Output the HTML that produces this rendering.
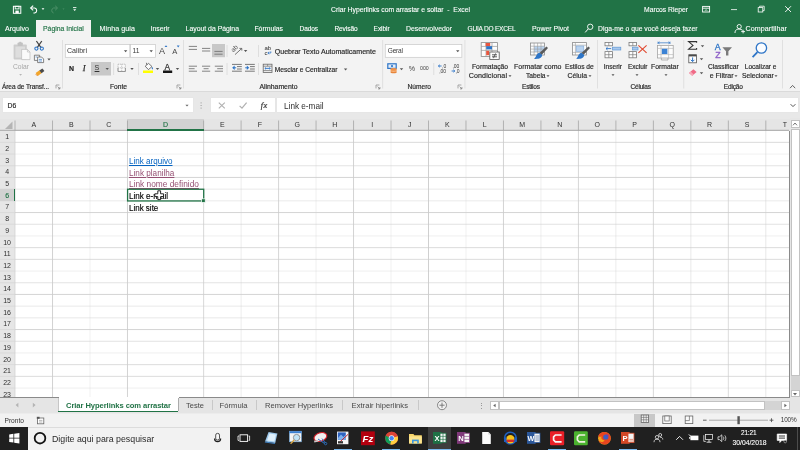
<!DOCTYPE html>
<html lang="pt-BR"><head><meta charset="utf-8"><title>Criar Hyperlinks com arrastar e soltar - Excel</title>
<style>
html,body{margin:0;padding:0;}
body{width:800px;height:450px;overflow:hidden;position:relative;background:#fff;font-family:"Liberation Sans",sans-serif;}
.t{position:absolute;white-space:pre;line-height:12px;height:12px;}
.b{position:absolute;display:block;overflow:visible;}
#root{position:absolute;left:0;top:0;width:800px;height:450px;will-change:transform;}
</style></head><body><div id="root">
<div class="b" style="left:0.00px;top:0.00px;width:800.00px;height:37.00px;background:#217346;"></div>
<div class="b" style="left:36.20px;top:20.00px;width:55.30px;height:17.50px;background:#f3f3f3;"></div>
<div class="b" style="left:0.00px;top:37.00px;width:800.00px;height:54.20px;background:#f3f3f3;"></div>
<div class="b" style="left:0.00px;top:91.00px;width:800.00px;height:0.80px;background:#dadada;"></div>
<div class="b" style="left:0.00px;top:91.80px;width:800.00px;height:27.00px;background:#e8e8e8;"></div>
<div class="b" style="left:0.00px;top:118.60px;width:800.00px;height:12.00px;background:#e5e5e5;"></div>
<div class="b" style="left:3.00px;top:98.20px;width:189.60px;height:14.20px;background:#fff;box-shadow:0 0 0 0.5px #e4e4e4;"></div>
<div class="b" style="left:210.60px;top:98.20px;width:64.00px;height:14.20px;background:#fff;box-shadow:0 0 0 0.5px #e4e4e4;"></div>
<div class="b" style="left:277.40px;top:98.20px;width:520.20px;height:14.20px;background:#fff;box-shadow:0 0 0 0.5px #e4e4e4;"></div>
<div class="b" style="left:0.00px;top:131.00px;width:790.00px;height:266.50px;background:#fff;"></div>
<div class="b" style="left:0.00px;top:131.00px;width:15.00px;height:266.50px;background:#e6e6e6;"></div>
<div class="b" style="left:127.48px;top:118.80px;width:76.14px;height:11.40px;background:#d2d2d2;"></div>
<div class="b" style="left:0.00px;top:189.15px;width:15.00px;height:11.70px;background:#d2d2d2;"></div>
<svg class="b" style="left:0.00px;top:0.00px" width="800" height="450" viewBox="0 0 800 450"><line x1="52.52" y1="120.5" x2="52.52" y2="130.5" stroke="#9c9c9c" stroke-width="0.7"/><line x1="52.52" y1="131" x2="52.52" y2="397" stroke="#cbcbcb" stroke-width="0.9" stroke-opacity="0.97"/><line x1="90.00" y1="120.5" x2="90.00" y2="130.5" stroke="#9c9c9c" stroke-width="0.7"/><line x1="90.00" y1="131" x2="90.00" y2="397" stroke="#cbcbcb" stroke-width="0.9" stroke-opacity="0.30"/><line x1="127.48" y1="120.5" x2="127.48" y2="130.5" stroke="#9c9c9c" stroke-width="0.7"/><line x1="127.48" y1="131" x2="127.48" y2="397" stroke="#cbcbcb" stroke-width="0.9" stroke-opacity="0.97"/><line x1="203.62" y1="120.5" x2="203.62" y2="130.5" stroke="#9c9c9c" stroke-width="0.7"/><line x1="203.62" y1="131" x2="203.62" y2="397" stroke="#cbcbcb" stroke-width="0.9" stroke-opacity="0.82"/><line x1="241.10" y1="120.5" x2="241.10" y2="130.5" stroke="#9c9c9c" stroke-width="0.7"/><line x1="241.10" y1="131" x2="241.10" y2="397" stroke="#cbcbcb" stroke-width="0.9" stroke-opacity="0.40"/><line x1="278.58" y1="120.5" x2="278.58" y2="130.5" stroke="#9c9c9c" stroke-width="0.7"/><line x1="278.58" y1="131" x2="278.58" y2="397" stroke="#cbcbcb" stroke-width="0.9" stroke-opacity="0.88"/><line x1="316.06" y1="120.5" x2="316.06" y2="130.5" stroke="#9c9c9c" stroke-width="0.7"/><line x1="316.06" y1="131" x2="316.06" y2="397" stroke="#cbcbcb" stroke-width="0.9" stroke-opacity="0.34"/><line x1="353.54" y1="120.5" x2="353.54" y2="130.5" stroke="#9c9c9c" stroke-width="0.7"/><line x1="353.54" y1="131" x2="353.54" y2="397" stroke="#cbcbcb" stroke-width="0.9" stroke-opacity="0.94"/><line x1="391.02" y1="120.5" x2="391.02" y2="130.5" stroke="#9c9c9c" stroke-width="0.7"/><line x1="391.02" y1="131" x2="391.02" y2="397" stroke="#cbcbcb" stroke-width="0.9" stroke-opacity="0.30"/><line x1="428.50" y1="120.5" x2="428.50" y2="130.5" stroke="#9c9c9c" stroke-width="0.7"/><line x1="428.50" y1="131" x2="428.50" y2="397" stroke="#cbcbcb" stroke-width="0.9" stroke-opacity="1.00"/><line x1="465.98" y1="120.5" x2="465.98" y2="130.5" stroke="#9c9c9c" stroke-width="0.7"/><line x1="465.98" y1="131" x2="465.98" y2="397" stroke="#cbcbcb" stroke-width="0.9" stroke-opacity="0.30"/><line x1="503.46" y1="120.5" x2="503.46" y2="130.5" stroke="#9c9c9c" stroke-width="0.7"/><line x1="503.46" y1="131" x2="503.46" y2="397" stroke="#cbcbcb" stroke-width="0.9" stroke-opacity="0.94"/><line x1="540.94" y1="120.5" x2="540.94" y2="130.5" stroke="#9c9c9c" stroke-width="0.7"/><line x1="540.94" y1="131" x2="540.94" y2="397" stroke="#cbcbcb" stroke-width="0.9" stroke-opacity="0.34"/><line x1="578.42" y1="120.5" x2="578.42" y2="130.5" stroke="#9c9c9c" stroke-width="0.7"/><line x1="578.42" y1="131" x2="578.42" y2="397" stroke="#cbcbcb" stroke-width="0.9" stroke-opacity="0.88"/><line x1="615.90" y1="120.5" x2="615.90" y2="130.5" stroke="#9c9c9c" stroke-width="0.7"/><line x1="615.90" y1="131" x2="615.90" y2="397" stroke="#cbcbcb" stroke-width="0.9" stroke-opacity="0.40"/><line x1="653.38" y1="120.5" x2="653.38" y2="130.5" stroke="#9c9c9c" stroke-width="0.7"/><line x1="653.38" y1="131" x2="653.38" y2="397" stroke="#cbcbcb" stroke-width="0.9" stroke-opacity="0.82"/><line x1="690.86" y1="120.5" x2="690.86" y2="130.5" stroke="#9c9c9c" stroke-width="0.7"/><line x1="690.86" y1="131" x2="690.86" y2="397" stroke="#cbcbcb" stroke-width="0.9" stroke-opacity="0.46"/><line x1="728.34" y1="120.5" x2="728.34" y2="130.5" stroke="#9c9c9c" stroke-width="0.7"/><line x1="728.34" y1="131" x2="728.34" y2="397" stroke="#cbcbcb" stroke-width="0.9" stroke-opacity="0.76"/><line x1="765.82" y1="120.5" x2="765.82" y2="130.5" stroke="#9c9c9c" stroke-width="0.7"/><line x1="765.82" y1="131" x2="765.82" y2="397" stroke="#cbcbcb" stroke-width="0.9" stroke-opacity="0.52"/><line x1="15.0" y1="120.5" x2="15.0" y2="130.5" stroke="#9c9c9c" stroke-width="0.7"/><line x1="15.0" y1="131" x2="15.0" y2="397" stroke="#cfcfcf" stroke-width="0.7"/><line x1="15.0" y1="142.35" x2="789" y2="142.35" stroke="#cbcbcb" stroke-width="0.9" stroke-opacity="0.77"/><line x1="0" y1="142.35" x2="15.0" y2="142.35" stroke="#d2d2d2" stroke-width="0.6"/><line x1="15.0" y1="154.05" x2="789" y2="154.05" stroke="#cbcbcb" stroke-width="0.9" stroke-opacity="0.33"/><line x1="0" y1="154.05" x2="15.0" y2="154.05" stroke="#d2d2d2" stroke-width="0.6"/><line x1="15.0" y1="165.75" x2="789" y2="165.75" stroke="#cbcbcb" stroke-width="0.9" stroke-opacity="0.62"/><line x1="0" y1="165.75" x2="15.0" y2="165.75" stroke="#d2d2d2" stroke-width="0.6"/><line x1="15.0" y1="177.45" x2="789" y2="177.45" stroke="#cbcbcb" stroke-width="0.9" stroke-opacity="0.92"/><line x1="0" y1="177.45" x2="15.0" y2="177.45" stroke="#d2d2d2" stroke-width="0.6"/><line x1="15.0" y1="189.15" x2="789" y2="189.15" stroke="#cbcbcb" stroke-width="0.9" stroke-opacity="0.48"/><line x1="0" y1="189.15" x2="15.0" y2="189.15" stroke="#d2d2d2" stroke-width="0.6"/><line x1="15.0" y1="200.85" x2="789" y2="200.85" stroke="#cbcbcb" stroke-width="0.9" stroke-opacity="0.48"/><line x1="0" y1="200.85" x2="15.0" y2="200.85" stroke="#d2d2d2" stroke-width="0.6"/><line x1="15.0" y1="212.55" x2="789" y2="212.55" stroke="#cbcbcb" stroke-width="0.9" stroke-opacity="0.92"/><line x1="0" y1="212.55" x2="15.0" y2="212.55" stroke="#d2d2d2" stroke-width="0.6"/><line x1="15.0" y1="224.25" x2="789" y2="224.25" stroke="#cbcbcb" stroke-width="0.9" stroke-opacity="0.62"/><line x1="0" y1="224.25" x2="15.0" y2="224.25" stroke="#d2d2d2" stroke-width="0.6"/><line x1="15.0" y1="235.95" x2="789" y2="235.95" stroke="#cbcbcb" stroke-width="0.9" stroke-opacity="0.33"/><line x1="0" y1="235.95" x2="15.0" y2="235.95" stroke="#d2d2d2" stroke-width="0.6"/><line x1="15.0" y1="247.65" x2="789" y2="247.65" stroke="#cbcbcb" stroke-width="0.9" stroke-opacity="0.77"/><line x1="0" y1="247.65" x2="15.0" y2="247.65" stroke="#d2d2d2" stroke-width="0.6"/><line x1="15.0" y1="259.35" x2="789" y2="259.35" stroke="#cbcbcb" stroke-width="0.9" stroke-opacity="0.78"/><line x1="0" y1="259.35" x2="15.0" y2="259.35" stroke="#d2d2d2" stroke-width="0.6"/><line x1="15.0" y1="271.05" x2="789" y2="271.05" stroke="#cbcbcb" stroke-width="0.9" stroke-opacity="0.32"/><line x1="0" y1="271.05" x2="15.0" y2="271.05" stroke="#d2d2d2" stroke-width="0.6"/><line x1="15.0" y1="282.75" x2="789" y2="282.75" stroke="#cbcbcb" stroke-width="0.9" stroke-opacity="0.62"/><line x1="0" y1="282.75" x2="15.0" y2="282.75" stroke="#d2d2d2" stroke-width="0.6"/><line x1="15.0" y1="294.45" x2="789" y2="294.45" stroke="#cbcbcb" stroke-width="0.9" stroke-opacity="0.92"/><line x1="0" y1="294.45" x2="15.0" y2="294.45" stroke="#d2d2d2" stroke-width="0.6"/><line x1="15.0" y1="306.15" x2="789" y2="306.15" stroke="#cbcbcb" stroke-width="0.9" stroke-opacity="0.47"/><line x1="0" y1="306.15" x2="15.0" y2="306.15" stroke="#d2d2d2" stroke-width="0.6"/><line x1="15.0" y1="317.85" x2="789" y2="317.85" stroke="#cbcbcb" stroke-width="0.9" stroke-opacity="0.47"/><line x1="0" y1="317.85" x2="15.0" y2="317.85" stroke="#d2d2d2" stroke-width="0.6"/><line x1="15.0" y1="329.55" x2="789" y2="329.55" stroke="#cbcbcb" stroke-width="0.9" stroke-opacity="0.93"/><line x1="0" y1="329.55" x2="15.0" y2="329.55" stroke="#d2d2d2" stroke-width="0.6"/><line x1="15.0" y1="341.25" x2="789" y2="341.25" stroke="#cbcbcb" stroke-width="0.9" stroke-opacity="0.62"/><line x1="0" y1="341.25" x2="15.0" y2="341.25" stroke="#d2d2d2" stroke-width="0.6"/><line x1="15.0" y1="352.95" x2="789" y2="352.95" stroke="#cbcbcb" stroke-width="0.9" stroke-opacity="0.33"/><line x1="0" y1="352.95" x2="15.0" y2="352.95" stroke="#d2d2d2" stroke-width="0.6"/><line x1="15.0" y1="364.65" x2="789" y2="364.65" stroke="#cbcbcb" stroke-width="0.9" stroke-opacity="0.78"/><line x1="0" y1="364.65" x2="15.0" y2="364.65" stroke="#d2d2d2" stroke-width="0.6"/><line x1="15.0" y1="376.35" x2="789" y2="376.35" stroke="#cbcbcb" stroke-width="0.9" stroke-opacity="0.78"/><line x1="0" y1="376.35" x2="15.0" y2="376.35" stroke="#d2d2d2" stroke-width="0.6"/><line x1="15.0" y1="388.05" x2="789" y2="388.05" stroke="#cbcbcb" stroke-width="0.9" stroke-opacity="0.32"/><line x1="0" y1="388.05" x2="15.0" y2="388.05" stroke="#d2d2d2" stroke-width="0.6"/><line x1="0" y1="130.3" x2="789" y2="130.3" stroke="#a0a0a0" stroke-width="0.9"/><path d="M5 129 L12.5 129 L12.5 121.5 Z" fill="#b4b4b4"/></svg>
<div class="b" style="left:127.48px;top:129.30px;width:76.14px;height:1.40px;background:#217346;"></div>
<div class="b" style="left:14.20px;top:189.15px;width:1.10px;height:11.70px;background:#217346;"></div>
<div class="b" style="left:788.60px;top:131.00px;width:1.20px;height:266.50px;background:#8a8a8a;"></div>
<div class="b" style="left:0.00px;top:396.80px;width:58.60px;height:1.10px;background:#8a8a8a;"></div>
<div class="b" style="left:178.60px;top:396.80px;width:611.40px;height:1.10px;background:#8a8a8a;"></div>
<div class="b" style="left:789.80px;top:118.00px;width:10.20px;height:280.00px;background:#e6e6e6;"></div>
<div class="b" style="left:790.60px;top:120.00px;width:9.40px;height:8.30px;background:#fff;border:0.6px solid #c2c2c2;box-sizing:border-box;"></div>
<div class="b" style="left:790.60px;top:128.50px;width:9.40px;height:247.50px;background:#fff;border:0.6px solid #c2c2c2;box-sizing:border-box;"></div>
<div class="b" style="left:790.60px;top:376.00px;width:9.40px;height:13.60px;background:#d4d4d4;"></div>
<div class="b" style="left:790.60px;top:389.70px;width:9.40px;height:7.50px;background:#fff;border:0.6px solid #c2c2c2;box-sizing:border-box;"></div>
<svg class="b" style="left:792.30px;top:122.00px" width="6" height="4" viewBox="0 0 6 4"><path d="M1 3.3 L3 1 L5 3.3" fill="none" stroke="#777" stroke-width="1"/></svg>
<svg class="b" style="left:792.30px;top:391.80px" width="6" height="4" viewBox="0 0 6 4"><path d="M1 1 L5 1 L3 3.4 Z" fill="#666"/></svg>
<div class="b" style="left:0.00px;top:397.90px;width:800.00px;height:15.10px;background:#e5e5e5;"></div>
<div class="b" style="left:0.00px;top:413.00px;width:800.00px;height:1.00px;background:#ececec;"></div>
<div class="b" style="left:58.60px;top:396.60px;width:119.80px;height:14.60px;background:#fff;"></div>
<div class="b" style="left:58.40px;top:411.00px;width:120.00px;height:1.40px;background:#217346;"></div>
<div class="b" style="left:58.40px;top:397.90px;width:0.70px;height:13.00px;background:#c6c6c6;"></div>
<div class="b" style="left:178.20px;top:397.90px;width:0.70px;height:13.00px;background:#ababab;"></div>
<div class="b" style="left:212.40px;top:400.00px;width:0.70px;height:10.00px;background:#c8c8c8;"></div>
<div class="b" style="left:256.40px;top:400.00px;width:0.70px;height:10.00px;background:#c8c8c8;"></div>
<div class="b" style="left:342.40px;top:400.00px;width:0.70px;height:10.00px;background:#c8c8c8;"></div>
<div class="b" style="left:417.60px;top:400.00px;width:0.70px;height:10.00px;background:#c8c8c8;"></div>
<div class="b" style="left:490.00px;top:401.20px;width:9.30px;height:8.80px;background:#fff;border:0.6px solid #c2c2c2;box-sizing:border-box;"></div>
<div class="b" style="left:499.30px;top:401.20px;width:265.50px;height:8.80px;background:#fff;border:0.6px solid #c2c2c2;box-sizing:border-box;"></div>
<div class="b" style="left:764.80px;top:401.20px;width:16.40px;height:8.80px;background:#d4d4d4;"></div>
<div class="b" style="left:781.20px;top:401.20px;width:8.60px;height:8.80px;background:#fff;border:0.6px solid #c2c2c2;box-sizing:border-box;"></div>
<svg class="b" style="left:492.30px;top:403.00px" width="5" height="5" viewBox="0 0 5 5"><path d="M3.6 0.8 L3.6 4.2 L1.2 2.5 Z" fill="#666"/></svg>
<svg class="b" style="left:783.20px;top:403.00px" width="5" height="5" viewBox="0 0 5 5"><path d="M1.4 0.8 L1.4 4.2 L3.8 2.5 Z" fill="#666"/></svg>
<div class="b" style="left:480.50px;top:402.60px;width:1.00px;height:1.00px;background:#999;"></div>
<div class="b" style="left:480.50px;top:405.20px;width:1.00px;height:1.00px;background:#999;"></div>
<div class="b" style="left:480.50px;top:407.80px;width:1.00px;height:1.00px;background:#999;"></div>
<div class="b" style="left:0.00px;top:414.00px;width:800.00px;height:13.00px;background:#f2f2f2;"></div>
<div class="b" style="left:633.80px;top:414.00px;width:21.70px;height:13.00px;background:#c8c8c8;"></div>
<div class="b" style="left:0.00px;top:427.00px;width:800.00px;height:23.00px;background:#202020;"></div>
<div class="b" style="left:28.00px;top:427.00px;width:202.30px;height:23.00px;background:#f2f2f2;"></div>
<div class="b" style="left:28.00px;top:426.60px;width:202.30px;height:0.80px;background:#dcdcdc;"></div>
<div class="b" style="left:428.20px;top:427.00px;width:23.30px;height:23.00px;background:#3e3e3e;"></div>
<div class="b" style="left:334.00px;top:449.00px;width:18.00px;height:1.00px;background:#79b8ee;"></div>
<div class="b" style="left:382.00px;top:449.00px;width:18.00px;height:1.00px;background:#79b8ee;"></div>
<div class="b" style="left:428.20px;top:449.00px;width:23.30px;height:1.00px;background:#79b8ee;"></div>
<div class="b" style="left:548.00px;top:449.00px;width:18.00px;height:1.00px;background:#79b8ee;"></div>
<div class="b" style="left:619.00px;top:449.00px;width:18.00px;height:1.00px;background:#79b8ee;"></div>
<div class="b" style="left:797.30px;top:427.00px;width:0.70px;height:23.00px;background:#4c4c4c;"></div>
<svg class="b" style="left:0;top:0" width="800" height="450" viewBox="0 0 800 450"><g transform="translate(0,-0.6)"><rect x="13.40" y="6.90" width="7.40" height="7.00" fill="none" stroke="#fff" stroke-width="1.0" /><rect x="15.20" y="6.90" width="3.80" height="2.60" fill="none" stroke="#fff" stroke-width="0.9" /><rect x="15.40" y="11.20" width="3.40" height="2.70" fill="#fff" stroke="none" stroke-width="1" /><path d="M31.2 8.6 L34.8 8.6 A2.6 2.6 0 0 1 34.8 13.6 L33.4 13.6" fill="none" stroke="#fff" stroke-width="1.1" /><path d="M33.2 6.2 L30.6 8.6 L33.2 11" fill="none" stroke="#fff" stroke-width="1.1" /><path d="M41.65 8.92 L44.35 8.92 L43.00 10.58 Z" fill="#fff" stroke="none" stroke-width="1" /><path d="M57 8.6 L53.6 8.6 A2.6 2.6 0 0 0 53.6 13.6" fill="none" stroke="#4d9068" stroke-width="1.0" /><path d="M55.2 6.4 L57.6 8.6 L55.2 10.8" fill="none" stroke="#4d9068" stroke-width="1.0" /><path d="M62.50 9.10 L64.50 9.10 L63.50 10.40 Z" fill="#4d9068" stroke="none" stroke-width="1" /><line x1="73.00" y1="8.20" x2="76.40" y2="8.20" stroke="#fff" stroke-width="0.9" /><path d="M73.20 9.85 L76.20 9.85 L74.70 11.65 Z" fill="#fff" stroke="none" stroke-width="1" /></g><rect x="702.60" y="6.40" width="7.00" height="5.60" fill="none" stroke="#fff" stroke-width="0.9" /><line x1="702.60" y1="8.20" x2="709.60" y2="8.20" stroke="#fff" stroke-width="0.9" /><path d="M705 10.8 L706.1 9.6 L707.2 10.8" fill="none" stroke="#fff" stroke-width="0.8" /><line x1="731.00" y1="9.60" x2="737.00" y2="9.60" stroke="#fff" stroke-width="0.8" /><rect x="758.20" y="7.60" width="4.60" height="4.40" fill="none" stroke="#fff" stroke-width="0.8" /><path d="M759.6 7.6 L759.6 6.2 L764.2 6.2 L764.2 10.6 L762.8 10.6" fill="none" stroke="#fff" stroke-width="0.8" /><line x1="785.20" y1="6.20" x2="791.00" y2="12.00" stroke="#fff" stroke-width="0.9" /><line x1="791.00" y1="6.20" x2="785.20" y2="12.00" stroke="#fff" stroke-width="0.9" /><circle cx="590.20" cy="26.80" r="2.70" fill="none" stroke="#fff" stroke-width="0.9"/><line x1="588.30" y1="28.80" x2="585.20" y2="32.40" stroke="#fff" stroke-width="1.0" /><circle cx="739.20" cy="26.60" r="2.10" fill="none" stroke="#fff" stroke-width="0.9"/><path d="M735 33 C735 29.6 737 29.2 739.2 29.2 C740.6 29.2 741.6 29.4 742.4 30.2" fill="none" stroke="#fff" stroke-width="0.9" /><line x1="741.20" y1="31.60" x2="745.00" y2="31.60" stroke="#fff" stroke-width="0.9" /><line x1="743.10" y1="29.80" x2="743.10" y2="33.40" stroke="#fff" stroke-width="0.9" /><line x1="62.50" y1="40.00" x2="62.50" y2="88.50" stroke="#dadada" stroke-width="0.8" /><line x1="183.50" y1="40.00" x2="183.50" y2="88.50" stroke="#dadada" stroke-width="0.8" /><line x1="382.60" y1="40.00" x2="382.60" y2="88.50" stroke="#dadada" stroke-width="0.8" /><line x1="464.90" y1="40.00" x2="464.90" y2="88.50" stroke="#dadada" stroke-width="0.8" /><line x1="597.50" y1="40.00" x2="597.50" y2="88.50" stroke="#dadada" stroke-width="0.8" /><line x1="683.75" y1="40.00" x2="683.75" y2="88.50" stroke="#dadada" stroke-width="0.8" /><line x1="782.50" y1="40.00" x2="782.50" y2="88.50" stroke="#dadada" stroke-width="0.8" /><path d="M56 88.4 L56 85 L59.4 85" fill="none" stroke="#888" stroke-width="0.7" /><path d="M57.6 86.6 L59.8 88.8 M59.9 87 L59.9 88.9 L58 88.9" fill="none" stroke="#777" stroke-width="0.7" /><path d="M177 88.4 L177 85 L180.4 85" fill="none" stroke="#888" stroke-width="0.7" /><path d="M178.6 86.6 L180.8 88.8 M180.9 87 L180.9 88.9 L179 88.9" fill="none" stroke="#777" stroke-width="0.7" /><path d="M376 88.4 L376 85 L379.4 85" fill="none" stroke="#888" stroke-width="0.7" /><path d="M377.6 86.6 L379.8 88.8 M379.9 87 L379.9 88.9 L378 88.9" fill="none" stroke="#777" stroke-width="0.7" /><path d="M458 88.4 L458 85 L461.4 85" fill="none" stroke="#888" stroke-width="0.7" /><path d="M459.6 86.6 L461.8 88.8 M461.9 87 L461.9 88.9 L460 88.9" fill="none" stroke="#777" stroke-width="0.7" /><path d="M790 88.2 L792.6 85.4 L795.2 88.2" fill="none" stroke="#555" stroke-width="0.9" /><rect x="13.60" y="44.60" width="13.20" height="14.80" fill="#cdcdcd" stroke="none" stroke-width="1" rx="0.8"/><rect x="17.60" y="42.40" width="5.20" height="3.60" fill="#c2c2c2" stroke="none" stroke-width="1" rx="0.8"/><rect x="19.20" y="41.80" width="2.00" height="1.60" fill="#c2c2c2" stroke="none" stroke-width="1" /><rect x="15.40" y="46.60" width="9.60" height="11.00" fill="#dedede" stroke="none" stroke-width="1" /><path d="M21.6 49.4 L27.4 49.4 L30 52 L30 59.6 L21.6 59.6 Z" fill="#fafafa" stroke="#bdbdbd" stroke-width="0.7" /><path d="M27.4 49.4 L27.4 52 L30 52" fill="none" stroke="#bdbdbd" stroke-width="0.7" /><path d="M19.20 74.00 L22.00 74.00 L20.60 75.70 Z" fill="#b5b5b5" stroke="none" stroke-width="1" /><line x1="36.40" y1="41.00" x2="41.20" y2="47.80" stroke="#444" stroke-width="1.25" /><line x1="41.80" y1="41.00" x2="37.00" y2="47.80" stroke="#444" stroke-width="1.25" /><circle cx="36.40" cy="48.60" r="1.60" fill="none" stroke="#2e75c7" stroke-width="1.1"/><circle cx="41.80" cy="48.60" r="1.60" fill="none" stroke="#2e75c7" stroke-width="1.1"/><path d="M34.4 55.2 L39.6 55.2 L39.6 60.4 L34.4 60.4 Z" fill="#fafafa" stroke="#666" stroke-width="0.8" /><path d="M37.6 57 L41.6 57 L43.6 59 L43.6 62.6 L37.6 62.6 Z" fill="#fafafa" stroke="#666" stroke-width="0.8" /><line x1="38.80" y1="59.40" x2="42.00" y2="59.40" stroke="#3a7fd0" stroke-width="0.7" /><line x1="38.80" y1="61.00" x2="42.00" y2="61.00" stroke="#3a7fd0" stroke-width="0.7" /><line x1="35.60" y1="57.00" x2="37.20" y2="57.00" stroke="#3a7fd0" stroke-width="0.7" /><path d="M47.30 58.55 L50.70 58.55 L49.00 60.55 Z" fill="#555" stroke="none" stroke-width="1" /><path d="M35.6 73 L39.6 70.2 L41.8 73 L37.8 76 Z" fill="#f2a52a" stroke="none" stroke-width="1" /><path d="M39.4 70.4 L42.4 68.4 L44.4 71 L41.6 73.2 Z" fill="#4a4a4a" stroke="none" stroke-width="1" /><line x1="35.60" y1="74.00" x2="37.60" y2="76.00" stroke="#e07b1a" stroke-width="0.8" /><rect x="65.30" y="44.50" width="64.50" height="12.80" fill="#fff" stroke="#c8c8c8" stroke-width="0.7" /><rect x="130.60" y="44.50" width="25.00" height="12.80" fill="#fff" stroke="#c8c8c8" stroke-width="0.7" /><path d="M123.90 50.35 L127.30 50.35 L125.60 52.35 Z" fill="#555" stroke="none" stroke-width="1" /><path d="M149.50 50.35 L152.90 50.35 L151.20 52.35 Z" fill="#555" stroke="none" stroke-width="1" /><text x="159.00" y="54.00" font-size="9" fill="#444" font-family="Liberation Sans, sans-serif" >A</text><path d="M164.6 47 L166 45.2 L167.4 47 Z" fill="#2e75c7" stroke="none" stroke-width="1" /><text x="172.20" y="54.00" font-size="7.6" fill="#444" font-family="Liberation Sans, sans-serif" >A</text><path d="M176.8 45.6 L179.6 45.6 L178.2 47.4 Z" fill="#2e75c7" stroke="none" stroke-width="1" /><rect x="91.00" y="62.00" width="20.00" height="13.50" fill="#c8c8c8" stroke="none" stroke-width="1" /><path d="M105.50 68.05 L108.90 68.05 L107.20 70.05 Z" fill="#555" stroke="none" stroke-width="1" /><line x1="113.60" y1="63.00" x2="113.60" y2="75.00" stroke="#d8d8d8" stroke-width="0.8" /><line x1="138.50" y1="63.00" x2="138.50" y2="75.00" stroke="#d8d8d8" stroke-width="0.8" /><rect x="118.00" y="64.20" width="7.40" height="7.20" fill="#fbfbfb" stroke="#b0b0b0" stroke-width="0.8" stroke-dasharray="1.2 0.7"/><line x1="121.70" y1="64.20" x2="121.70" y2="71.40" stroke="#b8b8b8" stroke-width="0.8" stroke-dasharray="1.2 0.7"/><line x1="118.00" y1="67.80" x2="125.40" y2="67.80" stroke="#b8b8b8" stroke-width="0.8" stroke-dasharray="1.2 0.7"/><path d="M118 68 L118 71.5 L125.4 71.5 L125.4 68" fill="none" stroke="#8f8f8f" stroke-width="0.9" /><path d="M130.30 68.05 L133.70 68.05 L132.00 70.05 Z" fill="#555" stroke="none" stroke-width="1" /><path d="M145.2 66.2 L148.6 63.4 L152 66.6 L148.4 69.6 Z" fill="#fbfbfb" stroke="#555" stroke-width="0.8" /><path d="M146.8 64.8 L146.4 62.8" fill="none" stroke="#555" stroke-width="0.8" /><path d="M152.2 66.8 C153.2 68 153.2 69.2 152.4 69.4 C151.6 69.2 151.6 68 152.2 66.8 Z" fill="#2e75c7" stroke="none" stroke-width="1" /><rect x="143.00" y="70.50" width="10.00" height="2.50" fill="#ffff00" stroke="none" stroke-width="1" /><path d="M155.80 68.05 L159.20 68.05 L157.50 70.05 Z" fill="#555" stroke="none" stroke-width="1" /><text x="164.60" y="70.40" font-size="8.4" fill="#333" font-family="Liberation Sans, sans-serif" stroke="#333" stroke-width="0.25">A</text><rect x="163.00" y="70.50" width="9.20" height="2.50" fill="#161616" stroke="none" stroke-width="1" /><path d="M175.80 68.05 L179.20 68.05 L177.50 70.05 Z" fill="#555" stroke="none" stroke-width="1" /><line x1="188.80" y1="46.40" x2="197.00" y2="46.40" stroke="#707070" stroke-width="0.85" /><line x1="188.80" y1="49.40" x2="197.00" y2="49.40" stroke="#707070" stroke-width="0.85" /><line x1="202.00" y1="48.40" x2="210.20" y2="48.40" stroke="#707070" stroke-width="0.85" /><line x1="202.00" y1="51.00" x2="210.20" y2="51.00" stroke="#707070" stroke-width="0.85" /><rect x="212.00" y="44.00" width="13.00" height="13.20" fill="#c8c8c8" stroke="none" stroke-width="1" /><line x1="214.40" y1="51.40" x2="222.60" y2="51.40" stroke="#707070" stroke-width="0.85" /><line x1="214.40" y1="54.20" x2="222.60" y2="54.20" stroke="#707070" stroke-width="0.85" /><line x1="227.00" y1="45.00" x2="227.00" y2="57.00" stroke="#d8d8d8" stroke-width="0.8" /><line x1="227.00" y1="63.00" x2="227.00" y2="75.00" stroke="#d8d8d8" stroke-width="0.8" /><line x1="258.50" y1="45.00" x2="258.50" y2="57.00" stroke="#d8d8d8" stroke-width="0.8" /><line x1="258.50" y1="63.00" x2="258.50" y2="75.00" stroke="#d8d8d8" stroke-width="0.8" /><line x1="188.80" y1="66.20" x2="197.00" y2="66.20" stroke="#707070" stroke-width="0.85" /><line x1="188.80" y1="68.70" x2="194.60" y2="68.70" stroke="#707070" stroke-width="0.85" /><line x1="188.80" y1="71.20" x2="197.00" y2="71.20" stroke="#707070" stroke-width="0.85" /><line x1="202.00" y1="66.20" x2="210.20" y2="66.20" stroke="#707070" stroke-width="0.85" /><line x1="203.60" y1="68.70" x2="208.60" y2="68.70" stroke="#707070" stroke-width="0.85" /><line x1="202.00" y1="71.20" x2="210.20" y2="71.20" stroke="#707070" stroke-width="0.85" /><line x1="214.80" y1="66.20" x2="223.00" y2="66.20" stroke="#707070" stroke-width="0.85" /><line x1="217.20" y1="68.70" x2="223.00" y2="68.70" stroke="#707070" stroke-width="0.85" /><line x1="214.80" y1="71.20" x2="223.00" y2="71.20" stroke="#707070" stroke-width="0.85" /><g transform="translate(233.2,52.4) rotate(-42)"><text x="0" y="0" font-size="6.4" fill="#555" font-family="Liberation Sans, sans-serif">ab</text></g><path d="M235 54.6 L241.6 48.6" fill="none" stroke="#555" stroke-width="0.8" /><path d="M239.4 48.4 L241.8 48.4 L241.8 50.6" fill="none" stroke="#555" stroke-width="0.8" /><path d="M243.90 49.95 L247.30 49.95 L245.60 51.95 Z" fill="#555" stroke="none" stroke-width="1" /><line x1="232.00" y1="64.40" x2="241.80" y2="64.40" stroke="#6a6a6a" stroke-width="0.9" /><line x1="232.00" y1="71.20" x2="241.80" y2="71.20" stroke="#6a6a6a" stroke-width="0.9" /><line x1="237.00" y1="66.60" x2="241.80" y2="66.60" stroke="#6a6a6a" stroke-width="0.9" /><line x1="237.00" y1="69.00" x2="241.80" y2="69.00" stroke="#6a6a6a" stroke-width="0.9" /><path d="M232.2 67.8 L234.6 65.6 L234.6 70 Z" fill="#2e75c7" stroke="none" stroke-width="1" /><line x1="234.00" y1="67.80" x2="236.20" y2="67.80" stroke="#2e75c7" stroke-width="1.0" /><line x1="245.00" y1="64.40" x2="254.80" y2="64.40" stroke="#6a6a6a" stroke-width="0.9" /><line x1="245.00" y1="71.20" x2="254.80" y2="71.20" stroke="#6a6a6a" stroke-width="0.9" /><line x1="250.00" y1="66.60" x2="254.80" y2="66.60" stroke="#6a6a6a" stroke-width="0.9" /><line x1="250.00" y1="69.00" x2="254.80" y2="69.00" stroke="#6a6a6a" stroke-width="0.9" /><path d="M249.2 67.8 L246.8 65.6 L246.8 70 Z" fill="#2e75c7" stroke="none" stroke-width="1" /><line x1="245.20" y1="67.80" x2="247.40" y2="67.80" stroke="#2e75c7" stroke-width="1.0" /><text x="264.40" y="50.20" font-size="6.0" fill="#2a2a2a" font-family="Liberation Sans, sans-serif" >ab</text><text x="264.60" y="54.80" font-size="6.0" fill="#2a2a2a" font-family="Liberation Sans, sans-serif" >c</text><path d="M268 53 L270.8 53 L270.8 51.4" fill="none" stroke="#2e75c7" stroke-width="0.8" /><path d="M269.2 51.8 L267.8 53 L269.2 54.2" fill="none" stroke="#2e75c7" stroke-width="0.8" /><rect x="263.20" y="64.20" width="8.80" height="8.20" fill="none" stroke="#666" stroke-width="0.8" /><line x1="263.20" y1="66.20" x2="272.00" y2="66.20" stroke="#666" stroke-width="0.7" /><line x1="263.20" y1="70.60" x2="272.00" y2="70.60" stroke="#666" stroke-width="0.7" /><line x1="265.00" y1="68.40" x2="270.20" y2="68.40" stroke="#2e75c7" stroke-width="0.9" /><path d="M266 67.4 L264.8 68.4 L266 69.4 M269.2 67.4 L270.4 68.4 L269.2 69.4" fill="none" stroke="#2e75c7" stroke-width="0.7" /><line x1="267.60" y1="64.20" x2="267.60" y2="66.20" stroke="#666" stroke-width="0.6" /><path d="M343.90 68.45 L347.30 68.45 L345.60 70.45 Z" fill="#555" stroke="none" stroke-width="1" /><rect x="385.25" y="44.50" width="76.60" height="12.80" fill="#fff" stroke="#c8c8c8" stroke-width="0.7" /><path d="M456.05 50.35 L459.45 50.35 L457.75 52.35 Z" fill="#555" stroke="none" stroke-width="1" /><rect x="387.20" y="63.20" width="9.60" height="5.80" fill="#2e75c7" stroke="none" stroke-width="1" /><rect x="388.40" y="64.40" width="7.20" height="3.40" fill="#e3edf9" stroke="none" stroke-width="1" /><circle cx="392.00" cy="66.10" r="1.10" fill="#2e75c7" stroke="none" stroke-width="1"/><ellipse cx="393.6" cy="72" rx="3.2" ry="1.3" fill="#e8853a"/><ellipse cx="393.6" cy="70.6" rx="3.2" ry="1.3" fill="#f6b47c"/><ellipse cx="393.6" cy="69.4" rx="3.2" ry="1.3" fill="#f0934a"/><path d="M399.80 68.35 L403.20 68.35 L401.50 70.35 Z" fill="#555" stroke="none" stroke-width="1" /><line x1="433.75" y1="63.00" x2="433.75" y2="75.00" stroke="#d8d8d8" stroke-width="0.8" /><path d="M438.4 66 L441.6 66 M438.4 66 L439.8 64.8 M438.4 66 L439.8 67.2" fill="none" stroke="#2e75c7" stroke-width="0.9" /><text x="442.00" y="68.20" font-size="5" fill="#333" font-family="Liberation Sans, sans-serif" >,0</text><text x="439.20" y="73.20" font-size="5" fill="#333" font-family="Liberation Sans, sans-serif" >,00</text><path d="M451.6 71 L454.8 71 M454.8 71 L453.4 69.8 M454.8 71 L453.4 72.2" fill="none" stroke="#2e75c7" stroke-width="0.9" /><text x="452.40" y="68.20" font-size="5" fill="#333" font-family="Liberation Sans, sans-serif" >,00</text><text x="455.40" y="73.20" font-size="5" fill="#333" font-family="Liberation Sans, sans-serif" >,0</text><rect x="481.20" y="42.60" width="16.20" height="13.80" fill="#fdfdfd" stroke="#8a8a8a" stroke-width="0.8" /><line x1="486.00" y1="42.60" x2="486.00" y2="56.40" stroke="#9a9a9a" stroke-width="0.7" /><line x1="492.00" y1="42.60" x2="492.00" y2="56.40" stroke="#9a9a9a" stroke-width="0.7" /><line x1="481.20" y1="46.40" x2="497.40" y2="46.40" stroke="#9a9a9a" stroke-width="0.7" /><line x1="481.20" y1="50.40" x2="497.40" y2="50.40" stroke="#9a9a9a" stroke-width="0.7" /><rect x="485.60" y="43.00" width="4.60" height="3.20" fill="#e8553e" stroke="none" stroke-width="1" /><rect x="486.20" y="46.20" width="5.80" height="3.20" fill="#2e75c7" stroke="none" stroke-width="1" /><rect x="486.20" y="50.80" width="3.00" height="4.40" fill="#e8553e" stroke="none" stroke-width="1" /><rect x="489.80" y="52.00" width="9.40" height="7.40" fill="#fdfdfd" stroke="#555" stroke-width="0.8" /><line x1="492.00" y1="54.80" x2="497.00" y2="54.80" stroke="#333" stroke-width="0.8" /><line x1="492.00" y1="56.80" x2="497.00" y2="56.80" stroke="#333" stroke-width="0.8" /><line x1="495.60" y1="53.40" x2="493.40" y2="58.20" stroke="#333" stroke-width="0.7" /><rect x="530.50" y="43.00" width="14.00" height="12.00" fill="#fdfdfd" stroke="#8a8a8a" stroke-width="0.8" /><rect x="534.10" y="46.20" width="10.20" height="5.80" fill="#b9d3f0" stroke="none" stroke-width="1" /><line x1="530.50" y1="46.20" x2="544.50" y2="46.20" stroke="#9a9a9a" stroke-width="0.6" /><line x1="530.50" y1="49.10" x2="544.50" y2="49.10" stroke="#9a9a9a" stroke-width="0.6" /><line x1="530.50" y1="52.00" x2="544.50" y2="52.00" stroke="#9a9a9a" stroke-width="0.6" /><line x1="534.10" y1="43.00" x2="534.10" y2="55.00" stroke="#9a9a9a" stroke-width="0.6" /><line x1="537.60" y1="43.00" x2="537.60" y2="55.00" stroke="#9a9a9a" stroke-width="0.6" /><line x1="541.00" y1="43.00" x2="541.00" y2="55.00" stroke="#9a9a9a" stroke-width="0.6" /><path d="M546.4 46.5 L548.0 48.1 L541.5999999999999 54.9 L539.4 53.1 Z" fill="#5a5a5a" stroke="none" stroke-width="1" /><path d="M539.1999999999999 52.5 L542.1999999999999 55.099999999999994 C542.0 58.3 538.4 59.3 534.0 58.9 C536.1999999999999 57.7 536.0 53.9 539.1999999999999 52.5 Z" fill="#2e75c7" stroke="none" stroke-width="1" /><rect x="572.40" y="42.60" width="14.00" height="12.40" fill="#fdfdfd" stroke="#8a8a8a" stroke-width="0.8" /><line x1="572.40" y1="45.20" x2="586.40" y2="45.20" stroke="#9a9a9a" stroke-width="0.6" /><line x1="572.40" y1="52.40" x2="586.40" y2="52.40" stroke="#9a9a9a" stroke-width="0.6" /><line x1="575.40" y1="42.60" x2="575.40" y2="55.00" stroke="#9a9a9a" stroke-width="0.6" /><rect x="576.20" y="46.00" width="7.60" height="5.60" fill="#b9d3f0" stroke="#7fa8d8" stroke-width="0.6" /><path d="M588.4 46.4 L590.0 48.0 L583.5999999999999 54.8 L581.4 53.0 Z" fill="#5a5a5a" stroke="none" stroke-width="1" /><path d="M581.1999999999999 52.4 L584.1999999999999 55.0 C584.0 58.199999999999996 580.4 59.199999999999996 576.0 58.8 C578.1999999999999 57.599999999999994 578.0 53.8 581.1999999999999 52.4 Z" fill="#2e75c7" stroke="none" stroke-width="1" /><rect x="605.00" y="42.40" width="7.60" height="3.40" fill="#fdfdfd" stroke="#7a7a7a" stroke-width="0.8" /><line x1="608.80" y1="42.40" x2="608.80" y2="45.80" stroke="#7a7a7a" stroke-width="0.7" /><rect x="605.00" y="51.60" width="7.60" height="6.20" fill="#fdfdfd" stroke="#7a7a7a" stroke-width="0.8" /><line x1="608.80" y1="51.60" x2="608.80" y2="57.80" stroke="#7a7a7a" stroke-width="0.7" /><line x1="605.00" y1="54.70" x2="612.60" y2="54.70" stroke="#7a7a7a" stroke-width="0.7" /><rect x="612.40" y="47.20" width="8.40" height="2.80" fill="#a9c8ec" stroke="#5f98d6" stroke-width="0.7" /><path d="M606 48.6 L611.2 48.6 M606 48.6 L607.6 47.2 M606 48.6 L607.6 50" fill="none" stroke="#2e75c7" stroke-width="0.9" /><rect x="629.00" y="42.40" width="7.60" height="3.40" fill="#fdfdfd" stroke="#7a7a7a" stroke-width="0.8" /><line x1="632.80" y1="42.40" x2="632.80" y2="45.80" stroke="#7a7a7a" stroke-width="0.7" /><rect x="629.00" y="51.60" width="7.60" height="6.20" fill="#fdfdfd" stroke="#7a7a7a" stroke-width="0.8" /><line x1="632.80" y1="51.60" x2="632.80" y2="57.80" stroke="#7a7a7a" stroke-width="0.7" /><line x1="629.00" y1="54.70" x2="636.60" y2="54.70" stroke="#7a7a7a" stroke-width="0.7" /><rect x="632.60" y="47.20" width="5.40" height="2.80" fill="#a9c8ec" stroke="#5f98d6" stroke-width="0.7" /><line x1="638.40" y1="45.40" x2="646.60" y2="52.80" stroke="#e0452c" stroke-width="1.1" /><line x1="646.60" y1="45.40" x2="638.40" y2="52.80" stroke="#e0452c" stroke-width="1.1" /><rect x="657.40" y="45.40" width="15.80" height="12.60" fill="#fdfdfd" stroke="#9a9a9a" stroke-width="0.7" /><line x1="657.40" y1="48.40" x2="673.20" y2="48.40" stroke="#b0b0b0" stroke-width="0.6" /><line x1="657.40" y1="54.60" x2="673.20" y2="54.60" stroke="#b0b0b0" stroke-width="0.6" /><line x1="661.00" y1="45.40" x2="661.00" y2="58.00" stroke="#b0b0b0" stroke-width="0.6" /><line x1="668.60" y1="45.40" x2="668.60" y2="58.00" stroke="#b0b0b0" stroke-width="0.6" /><rect x="661.80" y="48.80" width="5.60" height="5.20" fill="#3b82d4" stroke="none" stroke-width="1" /><path d="M658 42.8 L670 42.8 M658 41.6 L658 44 M670 41.6 L670 44 M659.6 41.8 L658.4 42.8 L659.6 43.8 M668.4 41.8 L669.6 42.8 L668.4 43.8" fill="none" stroke="#2e75c7" stroke-width="0.7" /><path d="M661.4 58 L661.4 60 L668 60 L668 58" fill="none" stroke="#9a9a9a" stroke-width="0.7" /><path d="M696.6 42.8 L696.6 41.6 L688.6 41.6 L693 45.4 L688.6 49.2 L696.6 49.2 L696.6 48" fill="none" stroke="#333" stroke-width="1.1" /><path d="M700.80 45.35 L704.20 45.35 L702.50 47.35 Z" fill="#555" stroke="none" stroke-width="1" /><rect x="688.80" y="54.80" width="7.60" height="8.00" fill="#fdfdfd" stroke="#555" stroke-width="0.8" /><rect x="688.80" y="54.60" width="7.60" height="1.80" fill="#4a4a4a" stroke="none" stroke-width="1" /><path d="M692.6 57.4 L692.6 61.4 M690.8 59.8 L692.6 61.6 L694.4 59.8" fill="none" stroke="#2e75c7" stroke-width="1.0" /><path d="M699.80 58.35 L703.20 58.35 L701.50 60.35 Z" fill="#555" stroke="none" stroke-width="1" /><path d="M689 73 L693.4 69.2 L696.6 72 L692.2 75.8 Z" fill="#f06a86" stroke="none" stroke-width="1" /><path d="M689 73 L690.6 71.6 L693.8 74.4 L692.2 75.8 Z" fill="#f7a8b8" stroke="none" stroke-width="1" /><path d="M699.80 72.35 L703.20 72.35 L701.50 74.35 Z" fill="#555" stroke="none" stroke-width="1" /><text x="714.80" y="49.80" font-size="8.8" fill="#2e75c7" font-family="Liberation Sans, sans-serif" stroke="#2e75c7" stroke-width="0.3">A</text><text x="715.20" y="57.80" font-size="8.8" fill="#8d5fc7" font-family="Liberation Sans, sans-serif" stroke="#8d5fc7" stroke-width="0.3">Z</text><path d="M722.4 47.2 L732 47.2 L728.4 51.2 L728.4 55.6 L726 55.6 L726 51.2 Z" fill="#7a7a7a" stroke="none" stroke-width="1" /><circle cx="761.40" cy="48.00" r="5.20" fill="#fafcff" stroke="#2e75c7" stroke-width="1.3"/><line x1="757.40" y1="52.20" x2="752.60" y2="57.20" stroke="#2e75c7" stroke-width="1.8" /><path d="M185.40 104.70 L188.60 104.70 L187.00 106.60 Z" fill="#666" stroke="none" stroke-width="1" /><rect x="200.60" y="102.40" width="1.00" height="1.00" fill="#9a9a9a" stroke="none" stroke-width="1" /><rect x="200.60" y="105.00" width="1.00" height="1.00" fill="#9a9a9a" stroke="none" stroke-width="1" /><rect x="200.60" y="107.60" width="1.00" height="1.00" fill="#9a9a9a" stroke="none" stroke-width="1" /><path d="M218.8 102.6 L224.8 108.4 M224.8 102.6 L218.8 108.4" fill="none" stroke="#b0b0b0" stroke-width="1.1" /><path d="M239.6 105.8 L242 108.2 L246.6 102.6" fill="none" stroke="#b0b0b0" stroke-width="1.2" /><path d="M790.6 104.2 L793 106.6 L795.4 104.2" fill="none" stroke="#555" stroke-width="1.0" /><path d="M18.4 402.8 L18.4 407.4 L15.6 405.1 Z" fill="#b4b4b4" stroke="none" stroke-width="1" /><path d="M32.8 402.8 L32.8 407.4 L35.6 405.1 Z" fill="#b4b4b4" stroke="none" stroke-width="1" /><circle cx="442.00" cy="405.20" r="4.50" fill="#f0f0f0" stroke="#6f6f6f" stroke-width="0.8"/><line x1="439.40" y1="405.20" x2="444.60" y2="405.20" stroke="#6f6f6f" stroke-width="0.9" /><line x1="442.00" y1="402.60" x2="442.00" y2="407.80" stroke="#6f6f6f" stroke-width="0.9" /><rect x="37.40" y="418.00" width="6.40" height="5.80" fill="#fff" stroke="#666" stroke-width="0.8" /><rect x="36.80" y="416.80" width="2.80" height="2.00" fill="#555" stroke="none" stroke-width="1" /><line x1="39.00" y1="420.40" x2="42.40" y2="420.40" stroke="#888" stroke-width="0.6" /><line x1="39.00" y1="422.00" x2="42.40" y2="422.00" stroke="#888" stroke-width="0.6" /><rect x="641.20" y="415.00" width="7.40" height="7.40" fill="#f4f4f4" stroke="#666" stroke-width="0.8" /><line x1="641.20" y1="417.40" x2="648.60" y2="417.40" stroke="#666" stroke-width="0.6" /><line x1="641.20" y1="419.80" x2="648.60" y2="419.80" stroke="#666" stroke-width="0.6" /><line x1="643.70" y1="415.00" x2="643.70" y2="422.40" stroke="#666" stroke-width="0.6" /><line x1="646.20" y1="415.00" x2="646.20" y2="422.40" stroke="#666" stroke-width="0.6" /><rect x="662.80" y="416.00" width="8.40" height="7.60" fill="#fafafa" stroke="#666" stroke-width="0.8" /><rect x="664.80" y="416.00" width="4.40" height="5.00" fill="#fafafa" stroke="#666" stroke-width="0.7" /><rect x="685.20" y="416.00" width="7.60" height="7.60" fill="#fafafa" stroke="#666" stroke-width="0.8" /><path d="M685.2 420.6 L689.4 420.6 L689.4 416" fill="none" stroke="#666" stroke-width="0.7" /><line x1="703.00" y1="420.20" x2="706.60" y2="420.20" stroke="#555" stroke-width="0.9" /><line x1="709.00" y1="420.20" x2="768.00" y2="420.20" stroke="#8a8a8a" stroke-width="0.7" /><rect x="737.40" y="416.20" width="2.40" height="8.00" fill="#555" stroke="none" stroke-width="1" /><line x1="769.60" y1="420.20" x2="773.40" y2="420.20" stroke="#555" stroke-width="0.9" /><line x1="771.50" y1="418.30" x2="771.50" y2="422.10" stroke="#555" stroke-width="0.9" /><path d="M9.2 434.4 L13.4 433.8 L13.4 437.8 L9.2 437.8 Z M14.2 433.7 L19.4 432.9 L19.4 437.8 L14.2 437.8 Z M9.2 438.6 L13.4 438.6 L13.4 442.6 L9.2 442 Z M14.2 438.6 L19.4 438.6 L19.4 443.5 L14.2 442.7 Z" fill="#fff" stroke="none" stroke-width="1" /><circle cx="40.00" cy="438.20" r="5.30" fill="none" stroke="#141414" stroke-width="1.8"/><rect x="215.70" y="433.40" width="3.80" height="6.60" fill="#f8f8f8" stroke="#2a2a2a" stroke-width="0.8" rx="1.7"/><path d="M214.6 438.4 C214.6 442.6 220.6 442.6 220.6 438.4" fill="none" stroke="#1e1e1e" stroke-width="1.3" /><rect x="240.00" y="434.80" width="7.60" height="6.60" fill="none" stroke="#fff" stroke-width="0.9" /><path d="M239 436 L238 436 L238 440.4 L239 440.4 M248.6 436 L249.6 436 L249.6 440.4 L248.6 440.4" fill="none" stroke="#fff" stroke-width="0.8" /><path d="M268.6 432 L277.4 433.4 L275.2 443 L265 441.6 Z" fill="#9cc7ea" stroke="none" stroke-width="1" /><path d="M269.4 433.4 L276 434.4 L274.4 441.4 L267 440.4 Z" fill="#dff0fb" stroke="none" stroke-width="1" /><path d="M265 441.6 L275.2 443 L274.8 444 L264.8 442.6 Z" fill="#3f7fbf" stroke="none" stroke-width="1" /><rect x="289.40" y="431.20" width="12.00" height="10.60" fill="#f4f4f4" stroke="#6fa8dc" stroke-width="0.6" /><rect x="289.40" y="431.20" width="12.00" height="2.00" fill="#3a7fd0" stroke="none" stroke-width="1" /><circle cx="296.60" cy="437.60" r="3.20" fill="#bfe3f7" stroke="#8a8a8a" stroke-width="0.9"/><line x1="294.20" y1="440.00" x2="290.60" y2="443.80" stroke="#d9a441" stroke-width="1.4" /><ellipse cx="320.4" cy="437" rx="6.6" ry="4.2" fill="#f2f2f2" stroke="#d8202a" stroke-width="1.1" transform="rotate(-18 320.4 437)"/><path d="M318 439 L324.4 443.4 M322 438.6 L325.4 443" fill="none" stroke="#2e75c7" stroke-width="1.0" /><circle cx="325.60" cy="443.60" r="1.20" fill="none" stroke="#2e75c7" stroke-width="0.8"/><path d="M314 440.8 L318 440 L318.6 441.6 L314.4 442.4 Z" fill="#c9c9c9" stroke="none" stroke-width="1" /><rect x="337.00" y="431.60" width="11.40" height="12.60" fill="#f6f6f6" stroke="none" stroke-width="1" /><rect x="337.80" y="432.40" width="8.00" height="7.40" fill="#2f63c0" stroke="none" stroke-width="1" /><path d="M338 438 L341 434.6 L343.4 437 L345.8 434.8 L345.8 439.8 L338 439.8 Z" fill="#7fb2ee" stroke="none" stroke-width="1" /><line x1="340.00" y1="441.80" x2="348.00" y2="434.40" stroke="#c8202a" stroke-width="1.0" /><rect x="338.00" y="441.20" width="5.00" height="2.20" fill="#333" stroke="none" stroke-width="1" /><rect x="361.00" y="431.40" width="13.80" height="13.80" fill="#b3000f" stroke="none" stroke-width="1" /><text x="362.60" y="442.20" font-size="9.6" fill="#fff" font-family="Liberation Sans, sans-serif" font-weight="bold" font-style="italic">Fz</text><circle cx="391.60" cy="438.20" r="6.40" fill="#db4437" stroke="none" stroke-width="1"/><path d="M391.6 438.2 L385.7 435.6 A6.4 6.4 0 0 0 390.4 444.5 Z" fill="#0f9d58" stroke="none" stroke-width="1" /><path d="M391.6 438.2 L390.4 444.5 A6.4 6.4 0 0 0 397.6 436 Z" fill="#ffcd40" stroke="none" stroke-width="1" /><path d="M391.6 438.2 L397.6 436 A6.4 6.4 0 0 0 385.7 435.6 Z" fill="#db4437" stroke="none" stroke-width="1" /><circle cx="391.60" cy="438.20" r="2.90" fill="#f1f1f1" stroke="none" stroke-width="1"/><circle cx="391.60" cy="438.20" r="2.20" fill="#4285f4" stroke="none" stroke-width="1"/><path d="M409 434 L413.4 434 L414.4 435.2 L421.8 435.2 L421.8 443.4 L409 443.4 Z" fill="#f7d56a" stroke="none" stroke-width="1" /><rect x="409.00" y="436.40" width="12.80" height="7.00" fill="#fbe38e" stroke="none" stroke-width="1" /><rect x="412.00" y="439.60" width="6.80" height="3.80" fill="#3a96dd" stroke="none" stroke-width="1" /><rect x="413.60" y="441.20" width="3.60" height="2.20" fill="#fbe38e" stroke="none" stroke-width="1" /><rect x="433.00" y="432.00" width="8.60" height="11.80" fill="#1e7145" stroke="none" stroke-width="1" /><rect x="440.00" y="433.20" width="6.00" height="9.40" fill="#f4f4f4" stroke="#1e7145" stroke-width="0.8" /><line x1="443.00" y1="433.20" x2="443.00" y2="442.60" stroke="#1e7145" stroke-width="0.7" /><line x1="440.00" y1="436.40" x2="446.00" y2="436.40" stroke="#1e7145" stroke-width="0.6" /><line x1="440.00" y1="439.40" x2="446.00" y2="439.40" stroke="#1e7145" stroke-width="0.6" /><text x="434.60" y="441.00" font-size="7.6" fill="#fff" font-family="Liberation Sans, sans-serif" font-weight="bold">X</text><rect x="457.00" y="432.00" width="8.60" height="11.80" fill="#80397b" stroke="none" stroke-width="1" /><rect x="464.00" y="433.20" width="5.60" height="9.40" fill="#f4f4f4" stroke="#80397b" stroke-width="0.8" /><line x1="464.00" y1="436.40" x2="469.60" y2="436.40" stroke="#80397b" stroke-width="0.6" /><line x1="464.00" y1="439.40" x2="469.60" y2="439.40" stroke="#80397b" stroke-width="0.6" /><text x="458.20" y="441.00" font-size="7.6" fill="#fff" font-family="Liberation Sans, sans-serif" font-weight="bold">N</text><path d="M482.2 432 L488.4 432 L490.8 434.4 L490.8 444 L482.2 444 Z" fill="#fafafa" stroke="none" stroke-width="1" /><path d="M488.4 432 L488.4 434.4 L490.8 434.4 Z" fill="#cfcfcf" stroke="none" stroke-width="1" /><circle cx="510.40" cy="438.00" r="5.80" fill="none" stroke="#1f5fbf" stroke-width="1.6"/><circle cx="510.40" cy="439.20" r="4.20" fill="#f6c21a" stroke="none" stroke-width="1"/><rect x="506.60" y="439.60" width="7.60" height="2.40" fill="#d8302a" stroke="none" stroke-width="1" /><rect x="504.00" y="437.40" width="2.40" height="4.60" fill="#1f5fbf" stroke="none" stroke-width="1" /><rect x="514.40" y="437.40" width="2.40" height="4.60" fill="#1f5fbf" stroke="none" stroke-width="1" /><rect x="527.00" y="432.00" width="8.60" height="11.80" fill="#2b579a" stroke="none" stroke-width="1" /><rect x="534.00" y="433.20" width="6.00" height="9.40" fill="#f4f4f4" stroke="#2b579a" stroke-width="0.8" /><line x1="535.40" y1="436.00" x2="539.00" y2="436.00" stroke="#2b579a" stroke-width="0.6" /><line x1="535.40" y1="438.00" x2="539.00" y2="438.00" stroke="#2b579a" stroke-width="0.6" /><line x1="535.40" y1="440.00" x2="539.00" y2="440.00" stroke="#2b579a" stroke-width="0.6" /><text x="527.60" y="441.00" font-size="7.2" fill="#fff" font-family="Liberation Sans, sans-serif" font-weight="bold">W</text><rect x="550.00" y="431.20" width="14.20" height="14.00" fill="#ea1f27" stroke="none" stroke-width="1" rx="1.2"/><path d="M561.6 435 L555.4 435 L553.6 436.8 L553.6 440 L555.4 441.8 L561.6 441.8" fill="none" stroke="#f6f6f6" stroke-width="1.7" /><rect x="574.00" y="431.20" width="13.80" height="14.00" fill="#4bb22f" stroke="none" stroke-width="1" rx="1.2"/><path d="M585.2 435 L579.2 435 L577.4 436.8 L577.4 440 L579.2 441.8 L585.2 441.8" fill="none" stroke="#f0f0e0" stroke-width="1.7" /><circle cx="604.40" cy="438.20" r="6.30" fill="#f5a21b" stroke="none" stroke-width="1"/><path d="M598.4 436.4 C599 432 606 430.4 609.6 434.4 C611.6 437 611 441.2 608.4 443.2 C605 445.6 600 444.4 598.6 440.6 C600.4 442.6 603.6 442.4 604.6 440.2 C602.4 440.4 600.6 438.8 601.6 436.6 C600.4 436.8 599.2 436.6 598.4 436.4 Z" fill="#e8451f" stroke="none" stroke-width="1" /><circle cx="605.80" cy="437.00" r="2.60" fill="#3a5fc4" stroke="none" stroke-width="1"/><circle cx="607.20" cy="435.60" r="1.20" fill="#6f3fb0" stroke="none" stroke-width="1"/><rect x="621.00" y="432.00" width="8.60" height="11.80" fill="#d24726" stroke="none" stroke-width="1" /><rect x="628.00" y="433.20" width="6.00" height="9.40" fill="#f4f4f4" stroke="#d24726" stroke-width="0.8" /><line x1="629.40" y1="439.40" x2="633.00" y2="439.40" stroke="#d24726" stroke-width="0.6" /><line x1="629.40" y1="441.00" x2="633.00" y2="441.00" stroke="#d24726" stroke-width="0.6" /><text x="622.60" y="441.00" font-size="7.6" fill="#fff" font-family="Liberation Sans, sans-serif" font-weight="bold">P</text><circle cx="660.20" cy="435.00" r="1.50" fill="none" stroke="#fff" stroke-width="0.7"/><circle cx="657.00" cy="437.20" r="1.70" fill="none" stroke="#fff" stroke-width="0.7"/><path d="M654 442.2 C654 439.6 655.6 439.2 657 439.2 C658.6 439.2 660 439.8 660 442.2" fill="none" stroke="#fff" stroke-width="0.7" /><path d="M660 437.2 C661.8 437.2 662.8 438 662.8 439.6" fill="none" stroke="#fff" stroke-width="0.7" /><path d="M676.2 439.8 L679.6 436.4 L683 439.8" fill="none" stroke="#fff" stroke-width="0.9" /><rect x="690.40" y="435.60" width="8.00" height="4.60" fill="#fff" stroke="none" stroke-width="1" /><rect x="689.20" y="437.00" width="1.20" height="1.80" fill="#fff" stroke="none" stroke-width="1" /><path d="M688.6 434.6 L691.6 436.6" fill="none" stroke="#fff" stroke-width="0.8" /><rect x="705.60" y="434.60" width="7.00" height="5.00" fill="#202020" stroke="#fff" stroke-width="0.7" /><line x1="709.00" y1="439.80" x2="709.00" y2="442.00" stroke="#fff" stroke-width="0.8" /><line x1="706.60" y1="442.20" x2="711.40" y2="442.20" stroke="#fff" stroke-width="0.8" /><path d="M703.8 435.2 L703.8 441.4 L705.8 441.4" fill="none" stroke="#fff" stroke-width="0.7" /><path d="M718 436.8 L719.6 436.8 L721.8 434.8 L721.8 441.6 L719.6 439.6 L718 439.6 Z" fill="none" stroke="#fff" stroke-width="0.7" /><path d="M723.2 436.6 C724 437.6 724 438.8 723.2 439.8 M724.8 435.4 C726.2 437 726.2 439.4 724.8 441" fill="none" stroke="#fff" stroke-width="0.7" /><path d="M777.2 434 L786.6 434 L786.6 440.4 L781.8 440.4 L779.8 442.6 L779.8 440.4 L777.2 440.4 Z" fill="#fff" stroke="#fff" stroke-width="0.6" /><line x1="778.80" y1="436.00" x2="785.00" y2="436.00" stroke="#202020" stroke-width="0.9" /><line x1="778.80" y1="438.10" x2="785.00" y2="438.10" stroke="#202020" stroke-width="0.9" /><circle cx="785.20" cy="441.60" r="1.30" fill="#202020" stroke="#ddd" stroke-width="0.5"/></svg>
<span class="t" style="left:331.00px;top:3.80px;font-size:6.80px;color:#fff;-webkit-text-stroke:0.1px #fff;">Criar Hyperlinks com arrastar e soltar  -  Excel</span>
<span class="t" style="left:644.00px;top:3.80px;font-size:6.77px;color:#fff;-webkit-text-stroke:0.1px #fff;">Marcos Rieper</span>
<span class="t" style="left:5.00px;top:23.10px;font-size:7.08px;color:#fff;-webkit-text-stroke:0.1px #fff;">Arquivo</span>
<span class="t" style="left:43.00px;top:23.10px;font-size:6.89px;color:#217346;-webkit-text-stroke:0.15px #217346;">Página Inicial</span>
<span class="t" style="left:99.60px;top:23.10px;font-size:7.10px;color:#fff;letter-spacing:0.074px;-webkit-text-stroke:0.1px #fff;">Minha guia</span>
<span class="t" style="left:150.60px;top:23.10px;font-size:6.84px;color:#fff;-webkit-text-stroke:0.1px #fff;">Inserir</span>
<span class="t" style="left:185.60px;top:23.10px;font-size:6.86px;color:#fff;-webkit-text-stroke:0.1px #fff;">Layout da Página</span>
<span class="t" style="left:254.40px;top:23.10px;font-size:6.86px;color:#fff;-webkit-text-stroke:0.1px #fff;">Fórmulas</span>
<span class="t" style="left:299.60px;top:23.10px;font-size:6.55px;color:#fff;letter-spacing:-0.134px;-webkit-text-stroke:0.1px #fff;">Dados</span>
<span class="t" style="left:334.40px;top:23.10px;font-size:6.55px;color:#fff;letter-spacing:-0.077px;-webkit-text-stroke:0.1px #fff;">Revisão</span>
<span class="t" style="left:373.60px;top:23.10px;font-size:6.55px;color:#fff;letter-spacing:-0.076px;-webkit-text-stroke:0.1px #fff;">Exibir</span>
<span class="t" style="left:406.00px;top:23.10px;font-size:6.90px;color:#fff;-webkit-text-stroke:0.1px #fff;">Desenvolvedor</span>
<span class="t" style="left:467.60px;top:23.10px;font-size:6.55px;color:#fff;letter-spacing:-0.216px;-webkit-text-stroke:0.1px #fff;">GUIA DO EXCEL</span>
<span class="t" style="left:532.00px;top:23.10px;font-size:6.93px;color:#fff;-webkit-text-stroke:0.1px #fff;">Power Pivot</span>
<span class="t" style="left:598.00px;top:23.10px;font-size:6.79px;color:#fff;-webkit-text-stroke:0.1px #fff;">Diga-me o que você deseja fazer</span>
<span class="t" style="left:745.60px;top:23.10px;font-size:7.10px;color:#fff;letter-spacing:0.051px;-webkit-text-stroke:0.1px #fff;">Compartilhar</span>
<span class="t" style="left:13.00px;top:60.80px;font-size:6.70px;color:#a6a6a6;">Colar</span>
<span class="t" style="left:2.00px;top:80.80px;font-size:6.55px;color:#2b2b2b;letter-spacing:-0.089px;-webkit-text-stroke:0.18px #2b2b2b;">Área de Transf...</span>
<span class="t" style="left:67.00px;top:45.40px;font-size:7.06px;color:#3a3a3a;">Calibri</span>
<span class="t" style="left:132.60px;top:45.40px;font-size:6.74px;color:#3a3a3a;">11</span>
<span class="t" style="left:69.00px;top:62.70px;font-size:6.92px;color:#222;font-weight:bold;-webkit-text-stroke:0.18px #222;">N</span>
<span class="t" style="left:82.80px;top:62.70px;font-size:8.41px;color:#2a2a2a;font-family:'Liberation Serif',serif;font-style:italic;-webkit-text-stroke:0.25px #2a2a2a;">I</span>
<span class="t" style="left:94.60px;top:62.40px;font-size:7.10px;color:#333;letter-spacing:0.064px;text-decoration:underline;">S</span>
<span class="t" style="left:110.00px;top:80.80px;font-size:6.65px;color:#2b2b2b;-webkit-text-stroke:0.18px #2b2b2b;">Fonte</span>
<span class="t" style="left:274.75px;top:45.50px;font-size:7.07px;color:#2b2b2b;-webkit-text-stroke:0.18px #2b2b2b;">Quebrar Texto Automaticamente</span>
<span class="t" style="left:274.75px;top:63.90px;font-size:6.64px;color:#2b2b2b;-webkit-text-stroke:0.18px #2b2b2b;">Mesclar e Centralizar</span>
<span class="t" style="left:259.40px;top:80.80px;font-size:6.85px;color:#2b2b2b;-webkit-text-stroke:0.18px #2b2b2b;">Alinhamento</span>
<span class="t" style="left:387.75px;top:45.40px;font-size:6.55px;color:#3a3a3a;letter-spacing:-0.192px;">Geral</span>
<span class="t" style="left:408.75px;top:62.90px;font-size:7.10px;color:#444;letter-spacing:0.537px;">%</span>
<span class="t" style="left:420.00px;top:62.20px;font-size:5.24px;color:#444;">000</span>
<span class="t" style="left:407.50px;top:80.80px;font-size:6.61px;color:#2b2b2b;-webkit-text-stroke:0.18px #2b2b2b;">Número</span>
<span class="t" style="left:472.00px;top:60.80px;font-size:6.75px;color:#2b2b2b;-webkit-text-stroke:0.18px #2b2b2b;">Formatação</span>
<span class="t" style="left:468.75px;top:70.20px;font-size:7.10px;color:#2b2b2b;letter-spacing:0.115px;-webkit-text-stroke:0.18px #2b2b2b;">Condicional</span>
<svg class="b" style="left:506.50px;top:73.60px" width="6" height="4" viewBox="0 0 6 4"><path d="M1.5 1.25 L4.5 1.25 L3 3.05 Z" fill="#555"/></svg>
<span class="t" style="left:514.00px;top:60.80px;font-size:7.01px;color:#2b2b2b;-webkit-text-stroke:0.18px #2b2b2b;">Formatar como</span>
<span class="t" style="left:526.00px;top:70.20px;font-size:6.65px;color:#2b2b2b;-webkit-text-stroke:0.18px #2b2b2b;">Tabela</span>
<svg class="b" style="left:545.30px;top:73.60px" width="6" height="4" viewBox="0 0 6 4"><path d="M1.5 1.25 L4.5 1.25 L3 3.05 Z" fill="#555"/></svg>
<span class="t" style="left:565.00px;top:60.80px;font-size:6.63px;color:#2b2b2b;-webkit-text-stroke:0.18px #2b2b2b;">Estilos de</span>
<span class="t" style="left:567.50px;top:70.20px;font-size:6.88px;color:#2b2b2b;-webkit-text-stroke:0.18px #2b2b2b;">Célula</span>
<svg class="b" style="left:586.50px;top:73.60px" width="6" height="4" viewBox="0 0 6 4"><path d="M1.5 1.25 L4.5 1.25 L3 3.05 Z" fill="#555"/></svg>
<span class="t" style="left:522.00px;top:80.80px;font-size:6.55px;color:#2b2b2b;letter-spacing:-0.215px;-webkit-text-stroke:0.18px #2b2b2b;">Estilos</span>
<span class="t" style="left:603.75px;top:60.80px;font-size:6.57px;color:#2b2b2b;-webkit-text-stroke:0.18px #2b2b2b;">Inserir</span>
<svg class="b" style="left:609.50px;top:72.80px" width="6" height="4" viewBox="0 0 6 4"><path d="M1.5 1.25 L4.5 1.25 L3 3.05 Z" fill="#555"/></svg>
<span class="t" style="left:628.00px;top:60.80px;font-size:6.55px;color:#2b2b2b;letter-spacing:-0.026px;-webkit-text-stroke:0.18px #2b2b2b;">Excluir</span>
<svg class="b" style="left:634.00px;top:72.80px" width="6" height="4" viewBox="0 0 6 4"><path d="M1.5 1.25 L4.5 1.25 L3 3.05 Z" fill="#555"/></svg>
<span class="t" style="left:651.00px;top:60.80px;font-size:6.84px;color:#2b2b2b;-webkit-text-stroke:0.18px #2b2b2b;">Formatar</span>
<svg class="b" style="left:662.60px;top:72.80px" width="6" height="4" viewBox="0 0 6 4"><path d="M1.5 1.25 L4.5 1.25 L3 3.05 Z" fill="#555"/></svg>
<span class="t" style="left:630.60px;top:80.80px;font-size:6.55px;color:#2b2b2b;letter-spacing:-0.241px;-webkit-text-stroke:0.18px #2b2b2b;">Células</span>
<span class="t" style="left:708.00px;top:60.80px;font-size:6.67px;color:#2b2b2b;-webkit-text-stroke:0.18px #2b2b2b;">Classificar</span>
<span class="t" style="left:709.75px;top:70.20px;font-size:7.01px;color:#2b2b2b;-webkit-text-stroke:0.18px #2b2b2b;">e Filtrar</span>
<svg class="b" style="left:733.00px;top:73.60px" width="6" height="4" viewBox="0 0 6 4"><path d="M1.5 1.25 L4.5 1.25 L3 3.05 Z" fill="#555"/></svg>
<span class="t" style="left:744.75px;top:60.80px;font-size:6.57px;color:#2b2b2b;-webkit-text-stroke:0.18px #2b2b2b;">Localizar e</span>
<span class="t" style="left:742.00px;top:70.20px;font-size:6.72px;color:#2b2b2b;-webkit-text-stroke:0.18px #2b2b2b;">Selecionar</span>
<svg class="b" style="left:773.30px;top:73.60px" width="6" height="4" viewBox="0 0 6 4"><path d="M1.5 1.25 L4.5 1.25 L3 3.05 Z" fill="#555"/></svg>
<span class="t" style="left:723.75px;top:80.80px;font-size:6.55px;color:#2b2b2b;letter-spacing:-0.156px;-webkit-text-stroke:0.18px #2b2b2b;">Edição</span>
<span class="t" style="left:7.50px;top:100.40px;font-size:6.81px;color:#2b2b2b;-webkit-text-stroke:0.18px #2b2b2b;">D6</span>
<span class="t" style="left:283.50px;top:100.40px;font-size:8.40px;color:#303030;transform:scaleX(0.9787);transform-origin:0 50%;">Link e-mail</span>
<span class="t" style="left:260.80px;top:100.00px;font-size:8.40px;color:#333;font-family:'Liberation Serif',serif;font-style:italic;letter-spacing:0.338px;-webkit-text-stroke:0.2px #333;">fx</span>
<span class="t" style="left:31.45px;top:119.00px;font-size:7.00px;color:#303030;">A</span>
<span class="t" style="left:68.93px;top:119.00px;font-size:7.00px;color:#303030;">B</span>
<span class="t" style="left:106.21px;top:119.00px;font-size:7.00px;color:#303030;">C</span>
<span class="t" style="left:163.02px;top:119.00px;font-size:7.00px;color:#217346;-webkit-text-stroke:0.15px #217346;">D</span>
<span class="t" style="left:220.03px;top:119.00px;font-size:7.00px;color:#303030;">E</span>
<span class="t" style="left:257.70px;top:119.00px;font-size:7.00px;color:#303030;">F</span>
<span class="t" style="left:294.60px;top:119.00px;font-size:7.00px;color:#303030;">G</span>
<span class="t" style="left:332.27px;top:119.00px;font-size:7.00px;color:#303030;">H</span>
<span class="t" style="left:371.31px;top:119.00px;font-size:7.00px;color:#303030;">I</span>
<span class="t" style="left:408.01px;top:119.00px;font-size:7.00px;color:#303030;">J</span>
<span class="t" style="left:444.91px;top:119.00px;font-size:7.00px;color:#303030;">K</span>
<span class="t" style="left:482.77px;top:119.00px;font-size:7.00px;color:#303030;">L</span>
<span class="t" style="left:519.28px;top:119.00px;font-size:7.00px;color:#303030;">M</span>
<span class="t" style="left:557.15px;top:119.00px;font-size:7.00px;color:#303030;">N</span>
<span class="t" style="left:594.44px;top:119.00px;font-size:7.00px;color:#303030;">O</span>
<span class="t" style="left:632.31px;top:119.00px;font-size:7.00px;color:#303030;">P</span>
<span class="t" style="left:669.40px;top:119.00px;font-size:7.00px;color:#303030;">Q</span>
<span class="t" style="left:707.07px;top:119.00px;font-size:7.00px;color:#303030;">R</span>
<span class="t" style="left:744.75px;top:119.00px;font-size:7.00px;color:#303030;">S</span>
<span class="t" style="left:782.66px;top:119.00px;font-size:7.00px;color:#303030;">T</span>
<span class="t" style="left:5.15px;top:131.25px;font-size:7.00px;color:#303030;">1</span>
<span class="t" style="left:5.15px;top:142.95px;font-size:7.00px;color:#303030;">2</span>
<span class="t" style="left:5.15px;top:154.65px;font-size:7.00px;color:#303030;">3</span>
<span class="t" style="left:5.15px;top:166.35px;font-size:7.00px;color:#303030;">4</span>
<span class="t" style="left:5.15px;top:178.05px;font-size:7.00px;color:#303030;">5</span>
<span class="t" style="left:5.15px;top:189.75px;font-size:7.00px;color:#217346;-webkit-text-stroke:0.15px #217346;">6</span>
<span class="t" style="left:5.15px;top:201.45px;font-size:7.00px;color:#303030;">7</span>
<span class="t" style="left:5.15px;top:213.15px;font-size:7.00px;color:#303030;">8</span>
<span class="t" style="left:5.15px;top:224.85px;font-size:7.00px;color:#303030;">9</span>
<span class="t" style="left:3.21px;top:236.55px;font-size:7.00px;color:#303030;">10</span>
<span class="t" style="left:3.47px;top:248.25px;font-size:7.00px;color:#303030;">11</span>
<span class="t" style="left:3.21px;top:259.95px;font-size:7.00px;color:#303030;">12</span>
<span class="t" style="left:3.21px;top:271.65px;font-size:7.00px;color:#303030;">13</span>
<span class="t" style="left:3.21px;top:283.35px;font-size:7.00px;color:#303030;">14</span>
<span class="t" style="left:3.21px;top:295.05px;font-size:7.00px;color:#303030;">15</span>
<span class="t" style="left:3.21px;top:306.75px;font-size:7.00px;color:#303030;">16</span>
<span class="t" style="left:3.21px;top:318.45px;font-size:7.00px;color:#303030;">17</span>
<span class="t" style="left:3.21px;top:330.15px;font-size:7.00px;color:#303030;">18</span>
<span class="t" style="left:3.21px;top:341.85px;font-size:7.00px;color:#303030;">19</span>
<span class="t" style="left:3.21px;top:353.55px;font-size:7.00px;color:#303030;">20</span>
<span class="t" style="left:3.21px;top:365.25px;font-size:7.00px;color:#303030;">21</span>
<span class="t" style="left:3.21px;top:376.95px;font-size:7.00px;color:#303030;">22</span>
<span class="t" style="left:3.21px;top:388.65px;font-size:7.00px;color:#303030;">23</span>
<span class="t" style="left:129.30px;top:154.90px;font-size:8.50px;color:#0563c1;text-decoration:underline;transform:scaleX(0.9491);transform-origin:0 50%;">Link arquivo</span>
<span class="t" style="left:129.30px;top:166.60px;font-size:8.50px;color:#954f72;text-decoration:underline;transform:scaleX(0.9607);transform-origin:0 50%;">Link planilha</span>
<span class="t" style="left:129.30px;top:178.30px;font-size:8.50px;color:#954f72;text-decoration:underline;transform:scaleX(0.9796);transform-origin:0 50%;">Link nome definido</span>
<span class="t" style="left:129.30px;top:190.00px;font-size:8.50px;color:#000;-webkit-text-stroke:0.15px #000;transform:scaleX(0.9514);transform-origin:0 50%;">Link e-mail</span>
<span class="t" style="left:129.30px;top:201.70px;font-size:8.50px;color:#000;-webkit-text-stroke:0.15px #000;transform:scaleX(0.9396);transform-origin:0 50%;">Link site</span>
<span class="t" style="left:66.00px;top:399.90px;font-size:7.60px;color:#217346;font-weight:bold;letter-spacing:-0.067px;">Criar Hyperlinks com arrastar</span>
<span class="t" style="left:186.00px;top:399.90px;font-size:7.53px;color:#484848;">Teste</span>
<span class="t" style="left:219.60px;top:399.90px;font-size:7.60px;color:#484848;letter-spacing:0.021px;">Fórmula</span>
<span class="t" style="left:265.00px;top:399.90px;font-size:7.55px;color:#484848;">Remover Hyperlinks</span>
<span class="t" style="left:351.60px;top:399.90px;font-size:7.60px;color:#484848;letter-spacing:0.013px;">Extrair hiperlinks</span>
<span class="t" style="left:4.50px;top:414.80px;font-size:6.62px;color:#333;">Pronto</span>
<span class="t" style="left:780.80px;top:414.20px;font-size:6.40px;color:#333;letter-spacing:-0.190px;">100%</span>
<span class="t" style="left:52.00px;top:432.90px;font-size:8.80px;color:#2a2a2a;">Digite aqui para pesquisar</span>
<span class="t" style="left:741.00px;top:427.20px;font-size:6.50px;color:#fff;letter-spacing:-0.192px;-webkit-text-stroke:0.1px #fff;">21:21</span>
<span class="t" style="left:732.50px;top:437.40px;font-size:6.79px;color:#fff;-webkit-text-stroke:0.1px #fff;">30/04/2018</span>
<svg class="b" style="left:0;top:0" width="800" height="450" viewBox="0 0 800 450"><rect x="127.58" y="189.25" width="76.14" height="11.70" fill="none" stroke="#217346" stroke-width="1.3" /><rect x="201.62" y="198.85" width="3.60" height="3.60" fill="#217346" stroke="#fff" stroke-width="0.7" /><path d="M157.79999999999998 190.79999999999998 H160.6 V193.79999999999998 H163.6 V196.6 H160.6 V199.6 H157.79999999999998 V196.6 H154.79999999999998 V193.79999999999998 H157.79999999999998 Z" fill="#fff" stroke="#111" stroke-width="0.9" /></svg>
</div></body></html>
